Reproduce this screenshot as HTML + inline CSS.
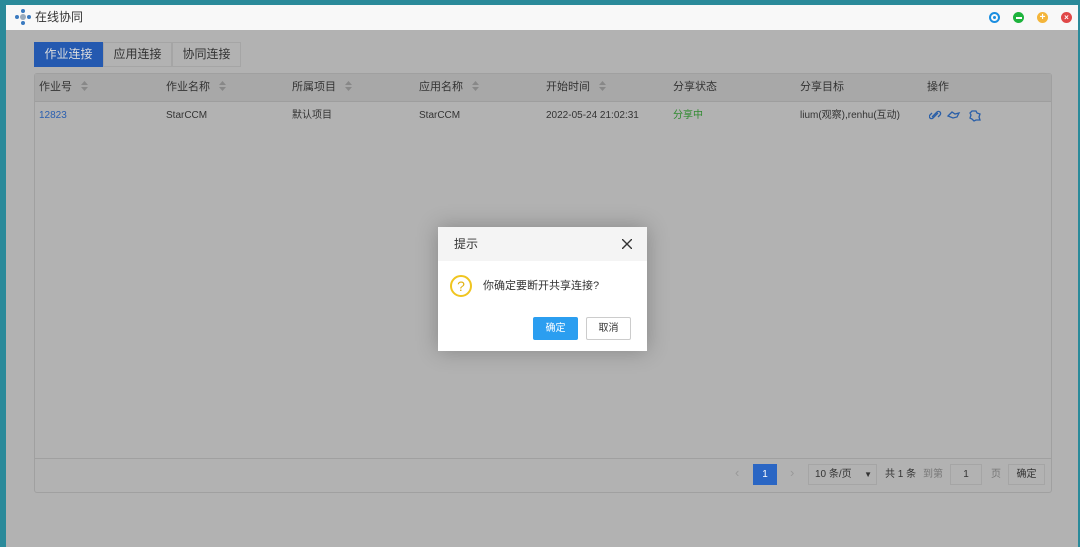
<!DOCTYPE html>
<html><head><meta charset="utf-8"><style>
*{box-sizing:border-box;margin:0;padding:0}
body{width:1080px;height:547px;overflow:hidden;background:#2a8a9a;font-family:"Liberation Sans","Noto Sans CJK SC",sans-serif;position:relative}
.win{position:absolute;left:6px;top:5px;width:1072px;height:542px;background:#b2b2b2}
.title{position:absolute;left:0;top:0;width:100%;height:25px;background:#f8f8f8;font-size:12px;color:#333}
.title span{position:absolute;left:29px;top:5px;line-height:14px}
.ctl{position:absolute;top:7px;width:11px;height:11px;border-radius:50%}
.tabs{position:absolute;left:28px;top:37px;height:25px;display:flex;font-size:12px}
.tabs div{width:69px;height:25px;line-height:23px;text-align:center;border:1px solid #a5a5a5;color:#333;background:#b2b2b2}
.tabs .a{background:#2459b0;color:#ddd;border-color:#2459b0}
.tbl{position:absolute;left:28px;top:68px;width:1018px;height:420px;border:1px solid #a0a0a0;border-radius:3px}
.hd{height:28px;background:#a8a8a8;border-bottom:1px solid #9e9e9e;position:relative;font-size:11px;color:#333}
.row{height:27px;position:relative;font-size:10px;color:#333}
.c{position:absolute;top:8px;white-space:nowrap;line-height:12px}
.hd .c{top:7px;line-height:13px}
.ar{display:inline-block;margin-left:9px;vertical-align:-1px}
.ft{position:absolute;left:0;bottom:0;width:100%;height:34px;border-top:1px solid #a0a0a0;font-size:10px;color:#333}
.ft span{line-height:12px}
.dlg{position:absolute;left:438px;top:227px;width:209px;height:124px;background:#fff;box-shadow:0 0 20px rgba(0,0,0,.25)}
.dh{height:34px;background:#f4f4f4;font-size:12px;color:#333;position:relative}
</style></head><body>
<div class="win">
 <div class="title">
  <svg style="position:absolute;left:9px;top:4px" width="16" height="16" viewBox="0 0 16 16"><circle cx="8" cy="8" r="3" fill="#9ab"/><circle cx="8" cy="2" r="2" fill="#3a7ac0"/><circle cx="8" cy="14" r="2" fill="#3a7ac0"/><circle cx="2" cy="8" r="2" fill="#3a7ac0"/><circle cx="14" cy="8" r="2" fill="#3a7ac0"/></svg>
  <span>在线协同</span>
  <div class="ctl" style="left:983px;border:2px solid #1b8ee0"><div style="width:3px;height:3px;background:#1b8ee0;border-radius:50%;margin:2px"></div></div>
  <div class="ctl" style="left:1007px;background:#1db33c"><div style="width:6px;height:2px;background:#fff;margin:4.5px 2.5px"></div></div>
  <div class="ctl" style="left:1031px;background:#f4b53a;color:#fff;font-size:10px;line-height:11px;text-align:center;font-weight:bold">+</div>
  <div class="ctl" style="left:1055px;background:#e04848;color:#fff;font-size:8px;line-height:11px;text-align:center;font-weight:bold">×</div>
 </div>
 <div class="tabs"><div class="a">作业连接</div><div>应用连接</div><div>协同连接</div></div>
 <div class="tbl">
  <div class="hd">
   <span class="c" style="left:4px">作业号<svg class="ar" width="7" height="10"><path d="M0 4L3.5 0 7 4zM0 6L3.5 10 7 6z" fill="#888"/></svg></span>
   <span class="c" style="left:131px">作业名称<svg class="ar" width="7" height="10"><path d="M0 4L3.5 0 7 4zM0 6L3.5 10 7 6z" fill="#888"/></svg></span>
   <span class="c" style="left:257px">所属项目<svg class="ar" width="7" height="10"><path d="M0 4L3.5 0 7 4zM0 6L3.5 10 7 6z" fill="#888"/></svg></span>
   <span class="c" style="left:384px">应用名称<svg class="ar" width="7" height="10"><path d="M0 4L3.5 0 7 4zM0 6L3.5 10 7 6z" fill="#888"/></svg></span>
   <span class="c" style="left:511px">开始时间<svg class="ar" width="7" height="10"><path d="M0 4L3.5 0 7 4zM0 6L3.5 10 7 6z" fill="#888"/></svg></span>
   <span class="c" style="left:638px">分享状态</span>
   <span class="c" style="left:765px">分享目标</span>
   <span class="c" style="left:892px">操作</span>
  </div>
  <div class="row">
   <span class="c" style="left:4px;color:#2a5fb0">12823</span>
   <span class="c" style="left:131px">StarCCM</span>
   <span class="c" style="left:257px">默认项目</span>
   <span class="c" style="left:384px">StarCCM</span>
   <span class="c" style="left:511px">2022-05-24 21:02:31</span>
   <span class="c" style="left:638px;color:#2e8a2e">分享中</span>
   <span class="c" style="left:765px">lium(观察),renhu(互动)</span>
   <svg style="position:absolute;left:894px;top:6px" width="60" height="14" viewBox="0 0 60 14" fill="none" stroke="#2a5fa8" stroke-width="1.3"><path d="M3 9l5-5a2 2 0 013 3l-2 2M9 5l-5 5a2 2 0 01-3-3l2-2"/><path d="M19 8l4-4 3 2 4-1-2 4-4 1z"/><path d="M43 3h4l1 2 3 1-1 3 1 3-4 0-2 1-2-2-2-1 1-3-1-2z"/></svg>
  </div>
  <div class="ft">
   <span style="position:absolute;left:700px;top:8px;color:#999;font-size:13px">‹</span>
   <div style="position:absolute;left:718px;top:5px;width:24px;height:21px;background:#2a66c4;color:#fff;text-align:center;line-height:21px">1</div>
   <span style="position:absolute;left:755px;top:8px;color:#999;font-size:13px">›</span>
   <div style="position:absolute;left:773px;top:5px;width:69px;height:21px;border:1px solid #a5a5a5;line-height:19px;padding-left:6px">10 条/页<span style="position:absolute;right:4px;top:4px;font-size:8px">▼</span></div>
   <span style="position:absolute;left:850px;top:10px">共 1 条</span>
   <span style="position:absolute;left:888px;top:10px;color:#777">到第</span>
   <div style="position:absolute;left:915px;top:5px;width:32px;height:21px;border:1px solid #a5a5a5;text-align:center;line-height:19px">1</div>
   <span style="position:absolute;left:956px;top:10px;color:#777">页</span>
   <div style="position:absolute;left:973px;top:5px;width:37px;height:21px;border:1px solid #a5a5a5;text-align:center;line-height:19px">确定</div>
  </div>
 </div>
</div>
<div class="dlg">
 <div class="dh"><span style="position:absolute;left:16px;top:10px;line-height:14px">提示</span><svg style="position:absolute;right:15px;top:12px" width="10" height="10"><path d="M0 0L10 10M10 0L0 10" stroke="#333" stroke-width="1.4"/></svg></div>
 <div style="position:absolute;left:12px;top:48px;width:22px;height:22px;border:2px solid #f0c520;border-radius:50%;text-align:center;line-height:18px;color:#e0b010;font-size:14px">?</div>
 <span style="position:absolute;left:45px;top:53px;font-size:11px;color:#333;line-height:13px">你确定要断开共享连接?</span>
 <div style="position:absolute;left:95px;top:90px;width:45px;height:23px;background:#2b9ef0;color:#fff;font-size:10px;text-align:center;line-height:23px;border-radius:2px">确定</div>
 <div style="position:absolute;left:148px;top:90px;width:45px;height:23px;border:1px solid #ccc;color:#333;font-size:10px;text-align:center;line-height:21px;border-radius:2px">取消</div>
</div>
</body></html>
